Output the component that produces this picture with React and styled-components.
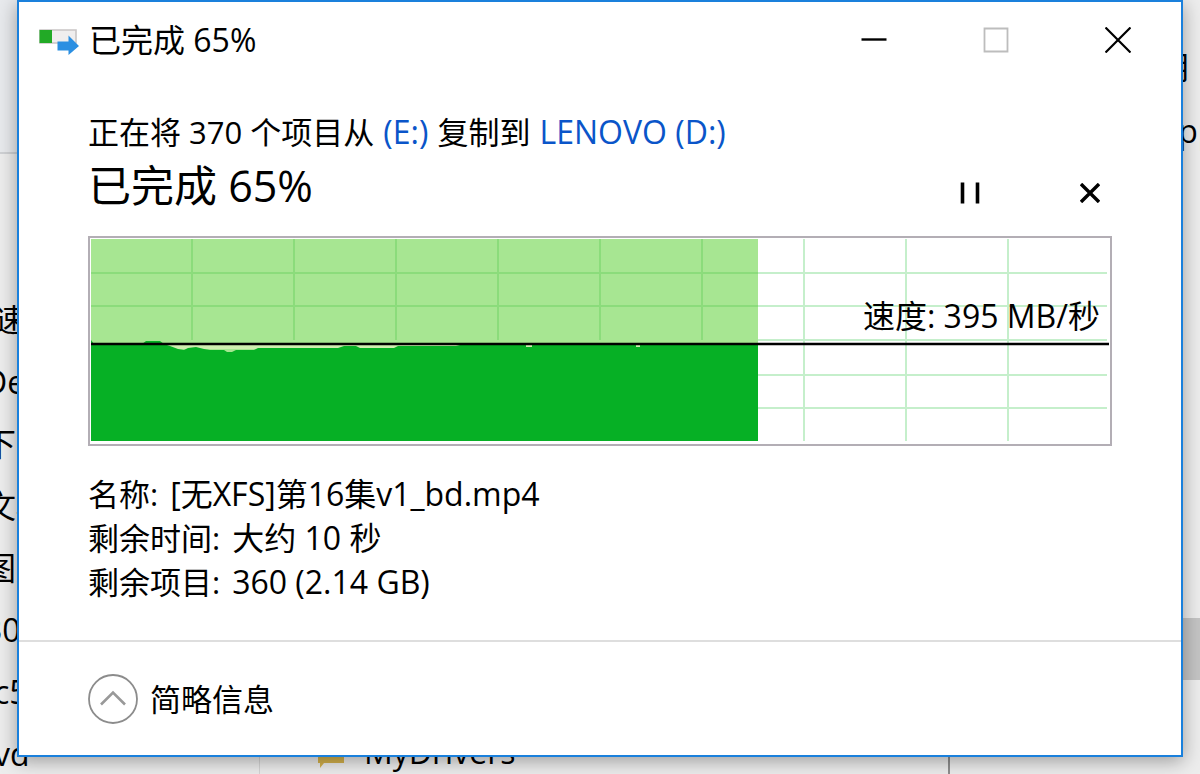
import styled, { createGlobalStyle } from "styled-components";

const sideItems = [
  { text: "速度", start: true },
  { text: "De" },
  { text: "下载" },
  { text: "文档" },
  { text: "图片" },
  { text: "30" },
  { text: "c5", start: true },
  { text: "vd", start: true },
];

const columns = [102, 204, 306, 408, 510, 612, 714, 816, 918];
const rows = [35, 68, 102, 137, 170];

const App = () => {
  return (
    <Desktop>
      <GlobalStyle />
      <Explorer aria-hidden="true">
        <SideBar>
          <SideTop />
          <SideList>
            {sideItems.map((item) => (
              <SideItem key={item.text} $start={item.start}>
                {item.text}
              </SideItem>
            ))}
          </SideList>
        </SideBar>
        <FileList>
          <FolderIcon />
          <div>MyDrivers</div>
        </FileList>
        <Details>
          <DetailsText>
            <div>用</div>
            <div>App</div>
          </DetailsText>
          <Thumb />
        </Details>
      </Explorer>

      <Dialog role="dialog" aria-labelledby="title">
        <TitleBar>
          <CopyIcon />
          <Title id="title">已完成 65%</Title>
          <WindowButton aria-label="最小化">
            <svg width="26" height="26" viewBox="0 0 26 26">
              <path d="M0.5 12.5H25.5" stroke="#000" strokeWidth="2.4" />
            </svg>
          </WindowButton>
          <WindowButton aria-label="最大化" disabled>
            <svg width="26" height="26" viewBox="0 0 26 26" fill="none">
              <path d="M1.5 1.5H24.5V24.5H1.5Z" stroke="#bdbdbd" strokeWidth="1.8" />
            </svg>
          </WindowButton>
          <WindowButton aria-label="关闭">
            <svg width="26" height="26" viewBox="0 0 26 26">
              <path d="M0.5 0.5L25.5 25.5M25.5 0.5L0.5 25.5" stroke="#000" strokeWidth="2.2" />
            </svg>
          </WindowButton>
        </TitleBar>

        <Content>
          <Summary>
            正在将 370 个项目从 <a href="#e">(E:)</a> 复制到{" "}
            <a href="#d">LENOVO (D:)</a>
          </Summary>
          <StatusRow>
            <Status>已完成 65%</Status>
            <ActionButton aria-label="暂停">
              <svg width="20" height="22" viewBox="0 0 20 22">
                <path d="M2.5 0.5V21.5M17.5 0.5V21.5" stroke="#000" strokeWidth="3.6" />
              </svg>
            </ActionButton>
            <ActionButton aria-label="取消">
              <svg width="20" height="20" viewBox="0 0 20 20">
                <path d="M1 1L19 19M19 1L1 19" stroke="#000" strokeWidth="3.4" />
              </svg>
            </ActionButton>
          </StatusRow>

          <ChartBox>
            <SpeedChart />
            <Speed>速度: 395 MB/秒</Speed>
          </ChartBox>

          <Info>
            <InfoRow>
              <dt>名称:</dt>
              <dd>[无XFS]第16集v1_bd.mp4</dd>
            </InfoRow>
            <InfoRow>
              <dt>剩余时间:</dt>
              <dd>大约 10 秒</dd>
            </InfoRow>
            <InfoRow>
              <dt>剩余项目:</dt>
              <dd>360 (2.14 GB)</dd>
            </InfoRow>
          </Info>
        </Content>

        <Footer>
          <Toggle aria-expanded="true">
            <svg width="50" height="50" viewBox="0 0 50 50" fill="none">
              <circle cx="25" cy="25" r="24" stroke="#8c8c8c" strokeWidth="1.8" />
              <path d="M13 30.5L25 18.5L37 30.5" stroke="#999" strokeWidth="2.6" />
            </svg>
            简略信息
          </Toggle>
        </Footer>
      </Dialog>
    </Desktop>
  );
};

export default App;

const CopyIcon = () => (
  <svg width="40" height="30" viewBox="0 0 40 30">
    <path d="M1 5H37V18H1Z" fill="#f0eeee" stroke="#c9c5c5" strokeWidth="1.6" />
    <path d="M0.5 5H13V18H0.5Z" fill="#22aa26" />
    <path d="M18.5 16.5H29.5V10.5L40 21L29.5 30V25.5H18.5Z" fill="#2b8fe2" />
  </svg>
);

const FolderIcon = () => (
  <svg width="26" height="26" viewBox="0 0 26 26">
    <path d="M0 2H26V21H6L2 26V21H0Z" fill="#d5b24c" />
  </svg>
);

const SpeedChart = () => (
  <svg
    width="100%"
    height="206"
    viewBox="0 0 1020 206"
    preserveAspectRatio="none"
    role="img"
    aria-label="复制速度"
  >
    <g stroke="#c5efcb" strokeWidth="2">
      {columns.map((x) => (
        <path key={x} d={`M${x} 1V203`} />
      ))}
      {rows.map((y) => (
        <path key={y} d={`M1 ${y}H1017`} />
      ))}
    </g>
    <path d="M1 1H668V203H1Z" fill="#a7e692" />
    <g stroke="#8bdc7b" strokeWidth="2">
      {columns.slice(0, 6).map((x) => (
        <path key={x} d={`M${x} 1V102`} />
      ))}
      <path d="M1 35H668M1 68H668" />
    </g>
    <path d="M1 106H668V111H1Z" fill="#cfefb0" />
    <path
      d="M1 102L4 106H52L56 103H70L74 106L80 108L88 111L94 112L98 110L106 109L114 111L120 112H134L137 114H142L146 112H164L168 110H248L254 108H266L270 110H304L308 108H366L370 107H436V109H442V107H546V109H550V107H668V203H1Z"
      fill="#06b025"
    />
    <path d="M1 106H1019" stroke="#000" strokeWidth="2.4" />
  </svg>
);

const GlobalStyle = createGlobalStyle`
  * {
    box-sizing: border-box;
  }

  body {
    margin: 0;
    background-color: #e9e9e9;
    color: #000;
    font-family: "Open Sans", "Noto Sans CJK SC", sans-serif;
    font-size: 32px;
    line-height: 44px;
  }

  button {
    display: flex;
    align-items: center;
    justify-content: center;
    padding: 0;
    border: none;
    background: none;
    color: inherit;
    font: inherit;
  }
`;

const Desktop = styled.div`
  position: relative;
  overflow: hidden;
  min-height: 100vh;
  padding: 0 17px 16px;
`;

const Explorer = styled.div`
  position: absolute;
  inset: 0;
  display: flex;
  overflow: hidden;
  white-space: nowrap;
  background-color: #ededed;
`;

const SideBar = styled.div`
  flex: none;
  width: 260px;
  border-right: 1px solid #d5d5d5;
`;

const SideTop = styled.div`
  height: 154px;
  background-color: #e8eaed;
  border-bottom: 2px solid #cfd1d4;
`;

const SideList = styled.div`
  padding-top: 135px;
`;

const SideItem = styled.div`
  line-height: 62px;
  margin-left: ${(props) => (props.$start ? "-6px" : "-16px")};
`;

const FileList = styled.div`
  flex: 1;
  display: flex;
  align-items: flex-end;
  gap: 20px;
  padding-left: 58px;
  border-right: 2px solid #8f8f8f;

  svg {
    margin-bottom: 6px;
  }
`;

const Details = styled.div`
  flex: none;
  width: 250px;
  display: flex;
  flex-direction: column;
  align-items: flex-end;
`;

const DetailsText = styled.div`
  width: 42px;
  padding-top: 35px;
  line-height: 64px;
`;

const Thumb = styled.div`
  width: 42px;
  height: 62px;
  margin-top: 455px;
  background-color: #c4c4c4;
`;

const Dialog = styled.div`
  position: relative;
  background-color: #fff;
  border: 2px solid #1a80dc;
  box-shadow: 0 4px 18px rgba(0, 0, 0, 0.35);
`;

const TitleBar = styled.div`
  display: flex;
  align-items: center;
  height: 76px;
  padding: 0 2px 0 20px;
`;

const Title = styled.div`
  flex: 1;
  padding-left: 10px;
`;

const WindowButton = styled.button`
  width: 122px;
  height: 76px;
`;

const Content = styled.div`
  padding: 32px 69px 36px;
`;

const Summary = styled.div`
  font-size: 31px;

  a {
    padding: 0 1px;
    color: #0a55c9;
    font-size: 32px;
    text-decoration: none;
  }
`;

const StatusRow = styled.div`
  display: flex;
  align-items: center;
  gap: 76px;
  height: 64px;
`;

const Status = styled.div`
  flex: 1;
  font-size: 43px;
`;

const ActionButton = styled.button`
  width: 44px;
  height: 44px;
  margin-top: 14px;
`;

const ChartBox = styled.div`
  position: relative;
  margin-top: 18px;
  border: 2px solid #b3aeb5;

  svg {
    display: block;
  }
`;

const Speed = styled.div`
  position: absolute;
  right: 10px;
  top: 56px;
`;

const Info = styled.dl`
  margin: 0;
  padding-top: 26px;
`;

const InfoRow = styled.div`
  display: flex;
  gap: 12px;

  dt {
    font-size: 31px;
  }

  dd {
    margin: 0;
  }
`;

const Footer = styled.div`
  display: flex;
  align-items: center;
  height: 115px;
  padding: 0 69px;
  border-top: 2px solid #dedede;
`;

const Toggle = styled.button`
  gap: 12px;
  font-size: 31px;
`;
